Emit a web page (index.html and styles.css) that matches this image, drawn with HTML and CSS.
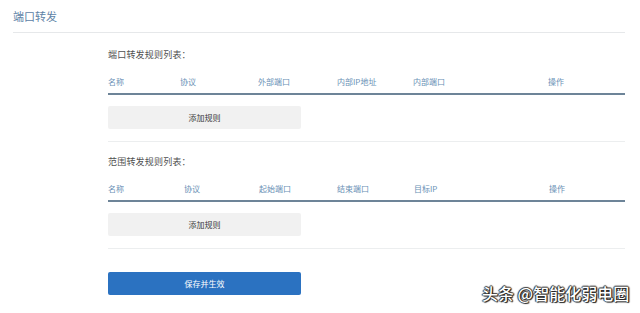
FILE: index.html
```html
<!DOCTYPE html>
<html lang="zh-CN">
<head>
<meta charset="utf-8">
<title>端口转发</title>
<link rel="stylesheet" href="styles.css">
</head>
<body>
<div class="page">
  <div class="title">端口转发</div>
  <div class="content">
    <div class="section">
      <div class="label">端口转发规则列表：</div>
      <div class="thead t1">
        <span>名称</span><span>协议</span><span>外部端口</span><span>内部IP地址</span><span>内部端口</span><span>操作</span>
      </div>
      <div class="btn add">添加规则</div>
      <div class="sep"></div>
    </div>
    <div class="section">
      <div class="label">范围转发规则列表：</div>
      <div class="thead t2">
        <span>名称</span><span>协议</span><span>起始端口</span><span>结束端口</span><span>目标IP</span><span>操作</span>
      </div>
      <div class="btn add">添加规则</div>
      <div class="sep"></div>
    </div>
    <div class="btn save">保存并生效</div>
  </div>
  <div class="watermark">头条 @智能化弱电圈</div>
</div>
</body>
</html>
```
FILE: styles.css
```css
html, body {
  margin: 0;
  padding: 0;
  background: #ffffff;
}
body {
  font-family: "Noto Sans CJK SC", "Noto Sans", sans-serif;
  width: 640px;
  height: 313px;
  overflow: hidden;
}
.page {
  position: relative;
  padding: 0 15px 0 13px;
  height: 313px;
}
.title {
  height: 32px;
  line-height: 32px;
  font-size: 11px;
  color: #5d82a6;
  border-bottom: 1px solid #e6e8ea;
}
.content {
  margin-left: 95px;
}
.section .label {
  height: 16px;
  line-height: 16px;
  font-size: 9px;
  letter-spacing: 0.2px;
  color: #505050;
  margin-top: 14px;
  margin-bottom: 8px;
}
.section + .section .label {
  margin-top: 12px;
}
.thead {
  display: flex;
  height: 22px;
  line-height: 22px;
  font-size: 8px;
  color: #6990b5;
  border-bottom: 2px solid #6d8498;
}
.thead span {
  flex: none;
}
.t1 span:nth-child(1) { width: 72px; }
.t1 span:nth-child(2) { width: 78px; }
.t1 span:nth-child(3) { width: 79px; }
.t1 span:nth-child(4) { width: 76px; }
.t1 span:nth-child(5) { width: 135px; }
.t2 span:nth-child(1) { width: 76px; }
.t2 span:nth-child(2) { width: 75px; }
.t2 span:nth-child(3) { width: 78px; }
.t2 span:nth-child(4) { width: 77px; }
.t2 span:nth-child(5) { width: 135px; }
.btn {
  width: 193px;
  height: 23px;
  line-height: 23px;
  text-align: center;
  font-size: 8px;
  border-radius: 2px;
}
.add {
  margin-top: 11px;
  background: #f1f1f1;
  color: #3a3a3a;
}
.sep {
  margin-top: 12px;
  height: 1px;
  background: #eceeef;
}
.save {
  margin-top: 23px;
  background: #2b72c1;
  color: #ffffff;
}
.watermark {
  position: absolute;
  left: 482px;
  top: 283px;
  font-size: 16px;
  line-height: 20px;
  color: #ffffff;
  font-weight: 500;
  white-space: nowrap;
  text-shadow: 0 0 1px #111, 1px 1px 1px #222, -1px 0 1px #444, 0 -1px 1px #444, 1px 0 1px #333;
}
```
